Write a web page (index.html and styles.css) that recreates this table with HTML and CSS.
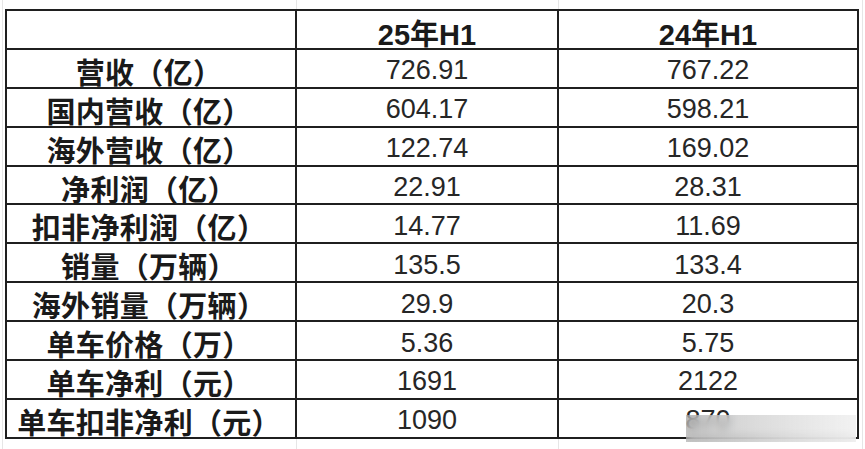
FILE: index.html
```html
<!DOCTYPE html>
<html lang="zh-CN">
<head>
<meta charset="utf-8">
<title>25年H1 vs 24年H1</title>
<link rel="stylesheet" href="styles.css">
</head>
<body>
<div class="sheet">
  <div class="grid">
    <div class="cell label"></div>
    <div class="cell head">25年H1</div>
    <div class="cell head">24年H1</div>

    <div class="cell label">营收（亿）</div>
    <div class="cell num">726.91</div>
    <div class="cell num">767.22</div>

    <div class="cell label">国内营收（亿）</div>
    <div class="cell num">604.17</div>
    <div class="cell num">598.21</div>

    <div class="cell label">海外营收（亿）</div>
    <div class="cell num">122.74</div>
    <div class="cell num">169.02</div>

    <div class="cell label">净利润（亿）</div>
    <div class="cell num">22.91</div>
    <div class="cell num">28.31</div>

    <div class="cell label">扣非净利润（亿）</div>
    <div class="cell num">14.77</div>
    <div class="cell num">11.69</div>

    <div class="cell label">销量（万辆）</div>
    <div class="cell num">135.5</div>
    <div class="cell num">133.4</div>

    <div class="cell label">海外销量（万辆）</div>
    <div class="cell num">29.9</div>
    <div class="cell num">20.3</div>

    <div class="cell label">单车价格（万）</div>
    <div class="cell num">5.36</div>
    <div class="cell num">5.75</div>

    <div class="cell label">单车净利（元）</div>
    <div class="cell num">1691</div>
    <div class="cell num">2122</div>

    <div class="cell label">单车扣非净利（元）</div>
    <div class="cell num">1090</div>
    <div class="cell num">870</div>
  </div>
  <div class="blur"></div>
</div>
</body>
</html>
```

FILE: styles.css
```css
html, body {
  margin: 0;
  padding: 0;
  background: #ffffff;
}

body {
  width: 865px;
  height: 449px;
  overflow: hidden;
}

.sheet {
  position: relative;
  width: 865px;
  height: 449px;
  box-sizing: border-box;
  padding: 9px 0 0 5px;
  background-image:
    linear-gradient(#e6e6e6, #e6e6e6),
    linear-gradient(#e6e6e6, #e6e6e6),
    linear-gradient(#e6e6e6, #e6e6e6),
    linear-gradient(#e6e6e6, #e6e6e6);
  background-repeat: no-repeat;
  background-size: 1px 449px, 1px 449px, 1px 449px, 1px 449px;
  background-position: 2px 0, 296px 0, 558px 0, 862px 0;
}

.grid {
  display: grid;
  grid-template-columns: 288px 260px 298px;
  grid-auto-rows: 36.9px;
  gap: 2px;
  padding: 2px;
  width: max-content;
  background: #1f1f1f;
}

.cell {
  background: #ffffff;
  display: flex;
  align-items: center;
  justify-content: center;
  padding-top: 5px;
  box-sizing: border-box;
  white-space: nowrap;
  color: #1a1a1a;
}

.label {
  font-family: "Noto Sans CJK SC", "Noto Sans", sans-serif;
  font-weight: 700;
  font-size: 29px;
  letter-spacing: 0.3px;
  padding-right: 4px;
}

.head {
  font-family: "Liberation Sans", "Noto Sans CJK SC", sans-serif;
  font-weight: 700;
  font-size: 29px;
}

.num {
  font-family: "Liberation Sans", Arial, sans-serif;
  font-weight: 400;
  font-size: 27px;
  color: #262626;
}

.blur {
  position: absolute;
  left: 686px;
  top: 415px;
  width: 170px;
  height: 27px;
  backdrop-filter: blur(4px);
  background: linear-gradient(to right,
    rgba(170, 170, 170, 0.6) 0%,
    rgba(195, 195, 195, 0.7) 25%,
    rgba(220, 220, 220, 0.8) 60%,
    rgba(240, 240, 240, 0.85) 100%);
}
```
